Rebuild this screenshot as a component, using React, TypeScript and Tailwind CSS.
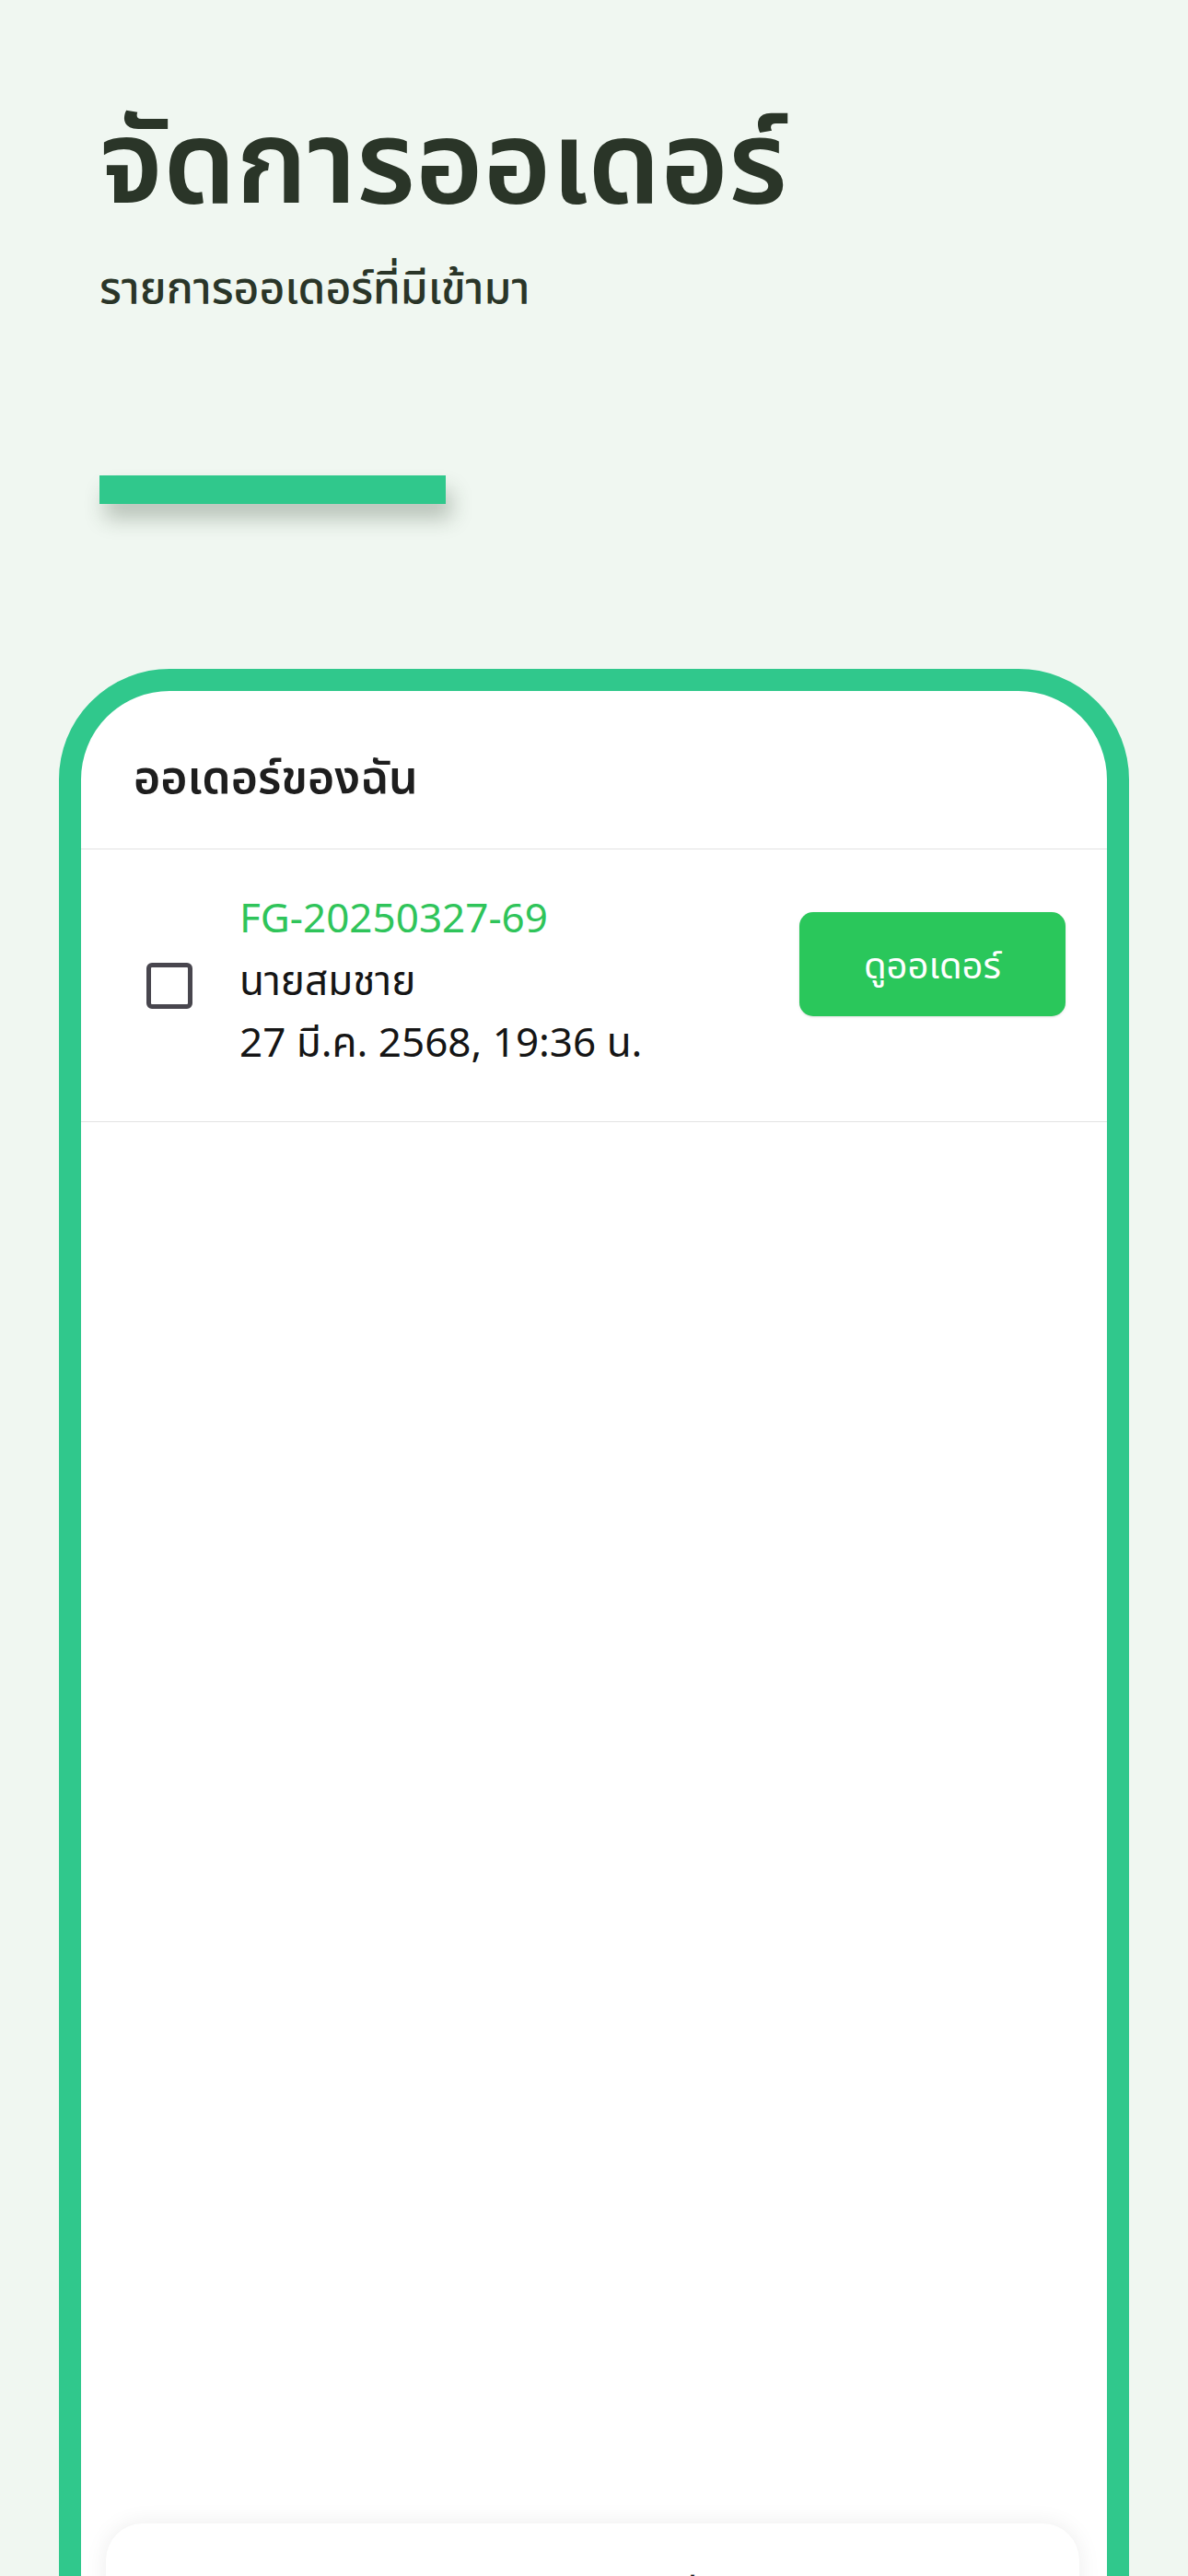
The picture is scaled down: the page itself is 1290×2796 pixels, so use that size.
const order = {
  code: "FG-20250327-69",
  customer: "นายสมชาย",
  date: "27 มี.ค. 2568, 19:36 น."
};

const App = () => {
  return (
    <div className="min-h-screen w-full overflow-hidden bg-[#f0f7f1] px-16 pt-[101px] font-['Noto_Sans','Noto_Sans_Thai',sans-serif]">
      {/* page header */}
      <div className="pl-[44px]">
        <h1 className="text-[126px] font-semibold leading-[140px] text-[#2a3528]">
          จัดการออเดอร์
        </h1>
        <p className="mt-[40px] text-[48px] font-medium leading-[60px] text-[#2a3528]">
          รายการออเดอร์ที่มีเข้ามา
        </p>
        <div className="mt-[175px] h-[31px] w-[376px] bg-[#30c88c] shadow-[6px_16px_22px_rgba(40,60,40,0.28)]" />
      </div>

      {/* orders panel */}
      <div className="mt-[179px] flex flex-col overflow-hidden rounded-[120px] border-[24px] border-[#30c88c] bg-white">
        <div className="flex h-[172px] shrink-0 items-center border-b border-[#e2e2e2] px-[57px] pt-[14px]">
          <h2 className="text-[50px] font-semibold text-[#1e1e1e]">ออเดอร์ของฉัน</h2>
        </div>

        <div className="flex h-[296px] shrink-0 border-b border-[#e2e2e2] pl-[71px] pr-[45px]">
          <button className="h-[50px] w-[50px] shrink-0 self-center rounded-[6px] border-[5px] border-[#48464e]" />
          <div className="ml-[51px] mt-[40px] flex-1 self-start text-[44px] leading-[67.5px] text-[#151515]">
            <div className="text-[#2fc45a]">{order.code}</div>
            <div>{order.customer}</div>
            <div>{order.date}</div>
          </div>
          <button className="mt-[68px] h-[113px] w-[289px] shrink-0 self-start rounded-[15px] bg-[#2ac75b] text-[40px] text-white shadow-sm">
            ดูออเดอร์
          </button>
        </div>

        <div className="h-[1521px] shrink-0" />

        {/* bottom action bar */}
        <div className="mb-[40px] ml-[27px] mr-[30px] h-[420px] shrink-0 rounded-[40px] bg-white px-10 pt-[50px] shadow-[0_0_24px_rgba(0,0,0,0.08)]">
          <div className="text-center text-[44px] text-[#151515]">ยืนยันรับออเดอร์ที่เลือก</div>
        </div>
      </div>
    </div>
  );
};

export default App;
